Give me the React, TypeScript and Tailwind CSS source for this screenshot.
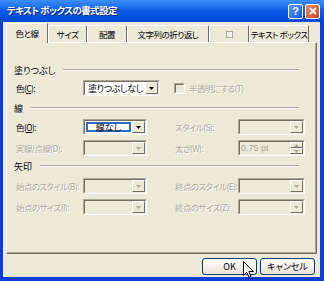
import type { ReactNode } from 'react';

const JP = "font-['Noto_Sans_CJK_JP',sans-serif] [font-feature-settings:'palt']";

function Arrow({ disabled }: { disabled?: boolean }) {
  return (
    <div className="w-[13px] shrink-0 h-full border border-t-white border-l-white border-b-[#716F64] border-r-[#716F64] bg-[#ECE9D8] flex items-center justify-center">
      <svg width="5" height="3" viewBox="0 0 5 3">
        <path d="M0 0h5L2.5 3z" fill={disabled ? '#ACA899' : '#000'} />
      </svg>
    </div>
  );
}

function Sunken({ w, children, disabled }: { w: number; children?: ReactNode; disabled?: boolean }) {
  return (
    <div
      className="shrink-0 h-[16px] border border-t-[#ACA899] border-l-[#ACA899] border-b-white border-r-white"
      style={{ width: w }}
    >
      <div
        className={`h-full flex border border-t-[#716F64] border-l-[#716F64] border-b-[#F1EFE2] border-r-[#F1EFE2] ${
          disabled ? 'bg-[#ECE9D8]' : 'bg-white'
        }`}
      >
        {children}
      </div>
    </div>
  );
}

function Combo({ w, text, disabled }: { w: number; text?: string; disabled?: boolean }) {
  return (
    <Sunken w={w} disabled={disabled}>
      <div className="flex-1 min-w-0 overflow-hidden whitespace-nowrap flex items-center pl-[3px] text-[9px] tracking-[-0.4px] leading-none text-black">
        {text}
      </div>
      <Arrow disabled={disabled} />
    </Sunken>
  );
}

function Label({ children, disabled, w }: { children: ReactNode; disabled?: boolean; w: number }) {
  return (
    <span
      className={`block shrink-0 text-[8.5px] tracking-[-0.6px] leading-none whitespace-nowrap ${
        disabled ? 'text-[#ACA899] [text-shadow:1px_1px_0_#fff]' : 'text-black'
      }`}
      style={{ width: w }}
    >
      {children}
    </span>
  );
}

function Group({ title }: { title: string }) {
  return (
    <div className="h-[14px] pl-[7px] pr-[16px] flex items-center gap-[8px]">
      <span className="text-[9px] leading-none text-black">{title}</span>
      <div className="flex-1 h-[2px] border-t border-t-[#ACA899] border-b border-b-white" />
    </div>
  );
}

const TABS = [
  { label: '色と線', w: 42 },
  { label: 'サイズ', w: 39 },
  { label: '配置', w: 40 },
  { label: '文字列の折り返し', w: 82 },
  { label: '', w: 40 },
  { label: 'テキスト ボックス', w: 60 },
];

export default function App() {
  return (
    <div className={`w-[324px] h-[281px] bg-[#0A3ED6] flex flex-col ${JP} select-none`}>
      {/* Title bar */}
      <div className="h-[22px] bg-gradient-to-b from-[#3D8EF8] via-[#0A5CE8] to-[#0448D6] flex items-center pl-[7px] pr-[4px]">
        <span className="flex-1 text-white text-[9.5px] font-bold leading-none tracking-[-0.6px] [text-shadow:1px_1px_0_#0A1E80]">
          テキスト ボックスの書式設定
        </span>
        <div className="flex gap-[2px]">
          <div className="w-[15px] h-[15px] rounded-[2px] border border-white bg-gradient-to-br from-[#5A9BFF] to-[#1A55E0] flex items-center justify-center text-white text-[11px] font-bold leading-none font-['Liberation_Sans',sans-serif]">
            ?
          </div>
          <div className="w-[15px] h-[15px] rounded-[2px] border border-white bg-gradient-to-br from-[#EB8B6A] to-[#C8401E] flex items-center justify-center">
            <svg width="8" height="8" viewBox="0 0 8 8">
              <path d="M1 1l6 6M7 1L1 7" stroke="#fff" strokeWidth="1.8" />
            </svg>
          </div>
        </div>
      </div>

      {/* Body */}
      <div className="relative flex-1 mx-[3px] mr-[4px] mb-[4px] bg-[#ECE9D8] flex flex-col pt-[2px] px-[3px]">
        {/* Tabs */}
        <div className="h-[18px] flex items-end">
          {TABS.map((t, i) => {
            const sel = i === 0;
            return (
              <div
                key={i}
                className={`shrink-0 flex items-center justify-center border-t border-l border-t-white border-l-white border-r border-r-[#716F64] bg-[#ECE9D8] ${
                  sel ? 'h-[20px] -mb-[1px] z-10 text-black' : 'h-[17px] text-black'
                }`}
                style={{ width: t.w }}
              >
                {t.label ? (
                  <span className="text-[8.5px] tracking-[-0.5px] leading-none whitespace-nowrap">{t.label}</span>
                ) : (
                  <div className="w-[7px] h-[7px] border border-[#ACA899] bg-[#F4F2EA]" />
                )}
              </div>
            );
          })}
        </div>

        {/* Panel */}
        <div className="h-[212px] w-[311px] border-t border-l border-t-white border-l-white border-r border-b border-r-[#716F64] border-b-[#716F64]">
          <div className="h-full border-r border-b border-r-[#ACA899] border-b-[#ACA899] pt-[20px]">
            <Group title="塗りつぶし" />
            <div className="h-[16px] mt-[3px] pl-[9px] flex items-center">
              <Label w={67}>色(<u>C</u>):</Label>
              <Combo w={77} text="塗りつぶしなし" />
              <div className="ml-[14px] flex items-center gap-[4px]">
                <div className="w-[11px] h-[11px] border border-t-[#ACA899] border-l-[#ACA899] border-b-white border-r-white">
                  <div className="w-full h-full border border-t-[#716F64] border-l-[#716F64] border-b-[#F1EFE2] border-r-[#F1EFE2] bg-[#ECE9D8]" />
                </div>
                <Label w={80} disabled>
                  半透明にする(T)
                </Label>
              </div>
            </div>

            <div className="mt-[5px]">
              <Group title="線" />
            </div>
            <div className="h-[16px] mt-[4px] pl-[9px] flex items-center">
              <Label w={67}>色(<u>O</u>):</Label>
              <Sunken w={64}>
                <div className="flex-1 p-[1px]">
                  <div className="h-full border-2 border-[#316AC5] bg-white flex items-center justify-center text-[9px] leading-none text-black">
                    線なし
                  </div>
                </div>
                <Arrow />
              </Sunken>
              <div className="ml-[28px]">
                <Label w={63} disabled>
                  スタイル(S):
                </Label>
              </div>
              <Combo w={67} disabled />
            </div>
            <div className="h-[16px] mt-[5px] pl-[9px] flex items-center">
              <Label w={67} disabled>
                実線/点線(D):
              </Label>
              <Combo w={64} disabled />
              <div className="ml-[28px]">
                <Label w={63} disabled>
                  太さ(W):
                </Label>
              </div>
              <Sunken w={67} disabled>
                <div className="flex-1 flex items-center pl-[1px] text-[9px] leading-none text-[#ACA899] font-['Liberation_Sans',sans-serif]">
                  0.75 pt
                </div>
                <div className="w-[13px] flex flex-col">
                  {[0, 1].map(k => (
                    <div
                      key={k}
                      className="flex-1 border border-t-white border-l-white border-b-[#716F64] border-r-[#716F64] flex items-center justify-center"
                    >
                      <svg width="5" height="3" viewBox="0 0 5 3">
                        <path d={k === 0 ? 'M0 3h5L2.5 0z' : 'M0 0h5L2.5 3z'} fill="#ACA899" />
                      </svg>
                    </div>
                  ))}
                </div>
              </Sunken>
            </div>

            <div className="mt-[3px]">
              <Group title="矢印" />
            </div>
            <div className="h-[16px] mt-[5px] pl-[9px] flex items-center">
              <Label w={67} disabled>
                始点のスタイル(B):
              </Label>
              <Combo w={64} disabled />
              <div className="ml-[28px]">
                <Label w={63} disabled>
                  終点のスタイル(E):
                </Label>
              </div>
              <Combo w={67} disabled />
            </div>
            <div className="h-[16px] mt-[5px] pl-[9px] flex items-center">
              <Label w={67} disabled>
                始点のサイズ(I):
              </Label>
              <Combo w={64} disabled />
              <div className="ml-[28px]">
                <Label w={63} disabled>
                  終点のサイズ(Z):
                </Label>
              </div>
              <Combo w={67} disabled />
            </div>
          </div>
        </div>

        {/* Buttons */}
        <div className="mt-[4px] h-[17px] flex justify-end gap-[3px] pr-[2px]">
          {['OK', 'キャンセル'].map(b => (
            <div
              key={b}
              className="w-[55px] h-full rounded-[3px] border border-[#003C74] bg-gradient-to-b from-white to-[#E6E3D6] flex items-center justify-center text-[9px] leading-none text-black"
            >
              {b}
            </div>
          ))}
        </div>

        {/* Mouse cursor over OK */}
        <svg className="absolute left-[240px] top-[239px]" width="11" height="17" viewBox="0 0 11 17">
          <path d="M0.5 0.5v14l3.2-3.2 2.3 5 2-0.9-2.2-4.9h4.5z" fill="#fff" stroke="#000" strokeWidth="1" />
        </svg>
      </div>
    </div>
  );
}
